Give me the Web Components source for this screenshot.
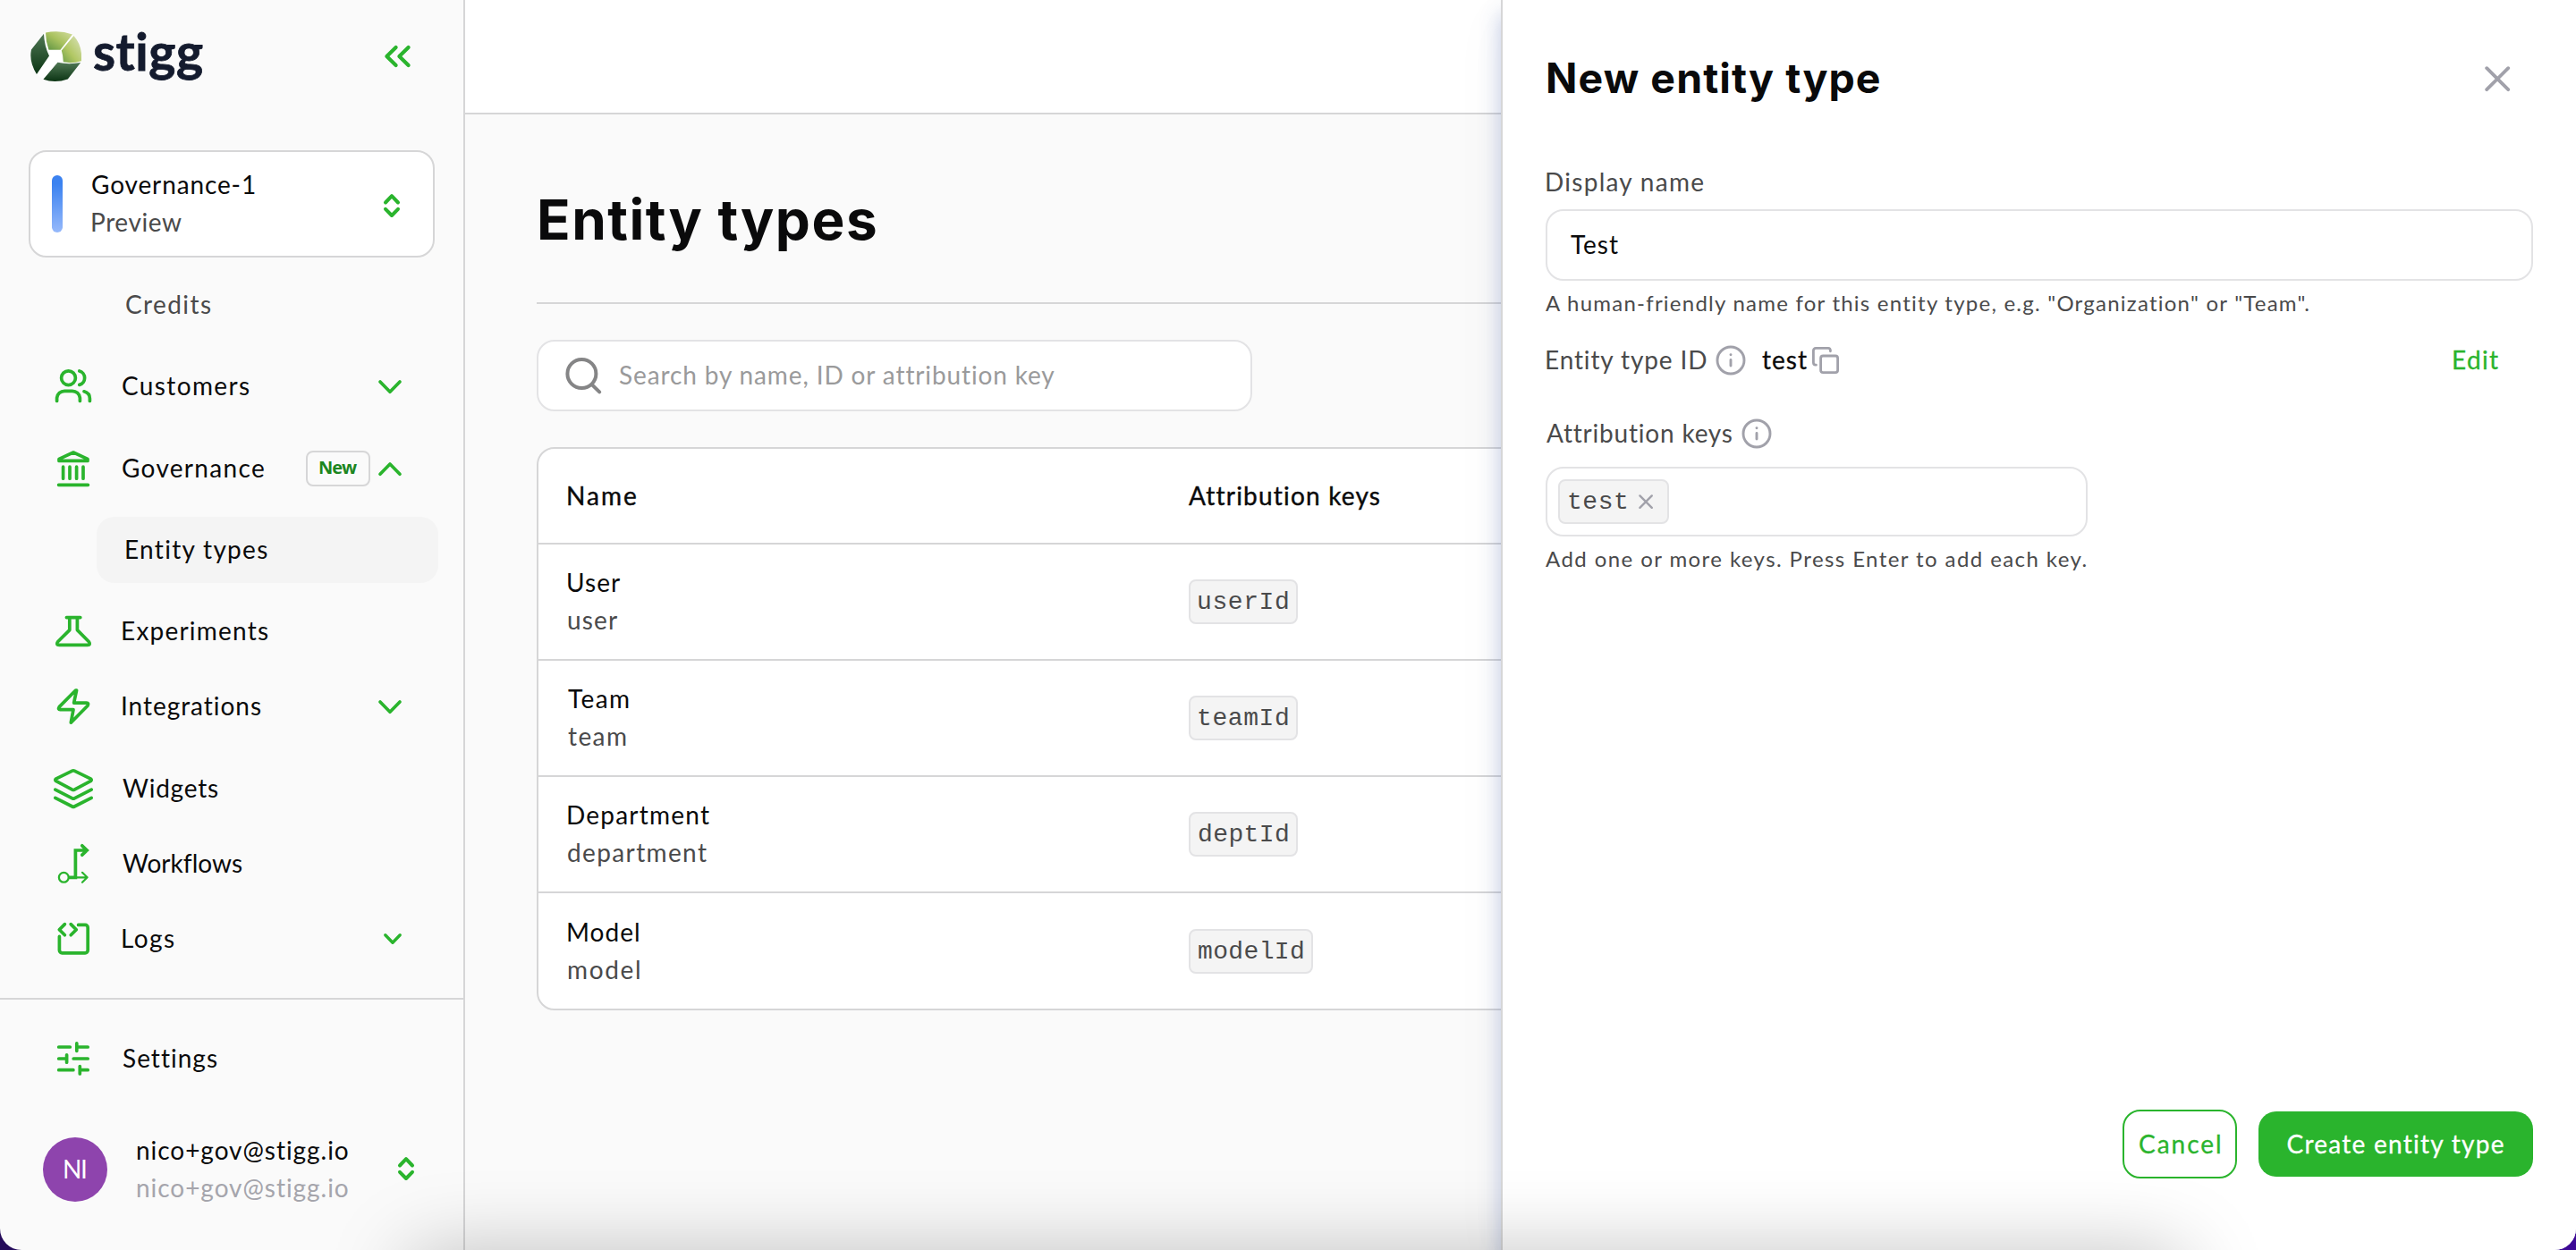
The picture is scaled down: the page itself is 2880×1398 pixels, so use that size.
<!DOCTYPE html>
<html lang="en">
<head>
<meta charset="utf-8">
<title>Entity types</title>
<style>
    html, body {
        margin: 0;
        height: 1398px;
        background: linear-gradient(90deg, #240a5a, #3d0a96);
        overflow: hidden;
    }
    body {
        font-family: Lato, "Open Sans", sans-serif;
        font-size: 28px;
        line-height: 42px;
        color: #0a0a0b;
        --green: #2ab42d;
        --line: #d6d6d7;
        --field: #e3e3e5;
        --muted: #4a4a4b;
        --grey: #a1a1aa;
    }
</style>
</head>
<body>
<st-app></st-app>

<script>
const ICONS = {
    users: '<circle cx="16.5" cy="12.7" r="7.9"/><path d="M28.8 5a8 8 0 0 1 0 15.4M3.6 38.4V35a8.6 8.6 0 0 1 8.6-7.7h8.6a8.6 8.6 0 0 1 8.6 7.7v3.4M34 27.8q6.4 1.8 6.4 8v2.6"/>',
    bank: '<path d="M22 4L38 11.4v2H6v-2zM10.6 20.2v13M18 20.2v13M25.6 20.2v13M33 20.2v13M5.6 40.3h32.8"/>',
    flask: '<path d="M14.4 6.6h15.4M17.8 7v13.6L4.6 33.7q-2.4 3.6 1.6 3.7h31.6q4-.1 1.6-3.7L26.4 20.6V7"/>',
    bolt: '<path d="M24.6 4L6.2 22.6q-1.8 3 1.2 3.1H22L19.3 40.2 38 21.2q1.6-3-1.2-3.1H22.6L25.6 4z"/>',
    layers: '<path d="M20.8 2.2L2.4 11.2q-1.2 1.1 0 2.2l18.4 9.8q1.2.6 2.4 0l18.4-9.8q1.2-1.1 0-2.2L23.2 2.2q-1.2-.6-2.4 0zM1.8 23.2l19 9.6q1.2.6 2.4 0l19-9.6M1.8 32.4l19 9.6q1.2.6 2.4 0l19-9.6"/>',
    flow: '<circle cx="11.3" cy="37.3" r="5.4" stroke-width="2.3"/><path d="M18 37.3h6.4V7H37M31.8 1.8L37.2 7l-5.4 5.2" stroke-linejoin="miter"/><path d="M24.4 37.3H37.6M32 31.8l5.6 5.5-5.6 5.5" stroke-width="2.2"/>',
    logs: '<path d="M12.4 5.6L6.3 11.7l6.1 6.1M19.2 5.6l6.1 6.1-6.1 6.1M6.4 19.4v15.4a3 3 0 0 0 3 3h25.8a3 3 0 0 0 3-3V9.4a3 3 0 0 0-3-3h-7.6"/>',
    sliders: '<path d="M5.7 9h12.6M26 9h12.2M25.8 4.9v8.4M5.7 22h8M14.6 17.8v8.4M22.2 22h16M5.7 34.7h16.2M29.3 30.6V39M30 34.7h8.2"/>',
    down: '<path d="M2 2l11 11.2L24 2"/>',
    up: '<path d="M2 13.2L13 2l11 11.2"/>',
    downSmall: '<path d="M1.8 1.8l8.2 8.4 8.2-8.4"/>',
    updown: '<path d="M2 9.5L9 2.2l7 7.3M2 16.8l7 7.2 7-7.2"/>',
    collapse: '<path d="M12.6 2L2.4 12l10.2 10M26.6 2L16.4 12l10.2 10"/>',
    search: '<circle cx="18.4" cy="18" r="16"/><path d="M30 30.4l8.2 8"/>',
    close: '<path d="M2.2 2.2l24 24M26.2 2.2l-24 24"/>',
    remove: '<path d="M1.4 1.4l13.4 13.4M14.8 1.4L1.4 14.8"/>',
    info: '<circle cx="17" cy="17" r="15"/><path d="M17 16.4v6.6M17 10.6v.2"/>',
    copy: '<rect x="9.6" y="10" width="19" height="18.6" rx="2.6"/><path d="M4.4 20.2H4a2.6 2.6 0 0 1-2.6-2.6V4A2.6 2.6 0 0 1 4 1.4h14a2.6 2.6 0 0 1 2.4 2.4v1"/>'
};

// <st-icon name="users" size="44 44" stroke="3.6">
class StIcon extends HTMLElement {
    constructor() {
        super();
        this.attachShadow({ mode: 'open' });
    }

    connectedCallback() {
        const [w, h] = (this.getAttribute('size') || '44 44').split(' ');
        this.shadowRoot.innerHTML = `
            <style>
                :host { display: block; flex: none; color: var(--green); }
                svg { display: block; overflow: visible; }
            </style>
            <svg width="${w}" height="${h}" viewBox="0 0 ${w} ${h}" fill="none" stroke="currentColor"
                stroke-width="${this.getAttribute('stroke') || 3.7}" stroke-linecap="round" stroke-linejoin="round">
                ${ICONS[this.getAttribute('name')]}
            </svg>
        `;
    }
}

// One line of text, tracked so that its glyphs span exactly "w" pixels
class StText extends HTMLElement {
    constructor() {
        super();
        this.attachShadow({ mode: 'open' });
        this.shadowRoot.innerHTML = `
            <style>
                :host { display: block; flex: none; padding-bottom: 2px; font-variant-ligatures: none; }
                span { display: block; white-space: nowrap; }
            </style>
            <span><slot></slot></span>
        `;
    }

    connectedCallback() {
        const text = this.textContent;
        const width = Number(this.getAttribute('w'));
        const cs = getComputedStyle(this);
        const ctx = document.createElement('canvas').getContext('2d');
        ctx.font = `${cs.fontWeight} ${cs.fontSize} ${cs.fontFamily}`;
        ctx.letterSpacing = '0.01px';
        const m = ctx.measureText(text);
        const ink = m.actualBoundingBoxLeft + m.actualBoundingBoxRight;
        const span = this.shadowRoot.querySelector('span');
        span.style.letterSpacing = `${(width - ink) / (text.length - 1)}px`;
        span.style.marginLeft = `${m.actualBoundingBoxLeft}px`;
        this.style.width = `${width}px`;
    }
}

class StLogo extends HTMLElement {
    constructor() {
        super();
        this.attachShadow({ mode: 'open' });
        this.shadowRoot.innerHTML = `
            <style>
                :host { display: flex; align-items: flex-start; gap: 14px; color: #141b2e; }
                st-text { font-size: 57px; line-height: 64px; font-weight: 700; margin-top: -10px; -webkit-text-stroke: .8px; }
            </style>
            <svg width="57" height="57" viewBox="0 0 57 57">
                <defs>
                    <linearGradient id="d" x1="0" y1="0" x2="0" y2="1"><stop offset="0" stop-color="#4f7754"/><stop offset="1" stop-color="#0c3514"/></linearGradient>
                    <linearGradient id="t" x1="1" y1="0" x2="0" y2="1"><stop offset="0" stop-color="#d3dc9f"/><stop offset=".5" stop-color="#a9c25f"/><stop offset="1" stop-color="#5d9342"/></linearGradient>
                    <linearGradient id="r" x1="1" y1="0" x2="0" y2="1"><stop offset="0" stop-color="#dbe3bd"/><stop offset=".6" stop-color="#b1c763"/><stop offset="1" stop-color="#6f9f49"/></linearGradient>
                </defs>
                <path fill="#fff" d="M16 1L48 4 57 34 42 53 14 54 7 48 0 23z"/>
                <path fill="url(#d)" d="M15 2.7L1 20.5Q-1.8 34 7 48L21 27.6Q15.5 16 15 2.7z"/>
                <path fill="url(#t)" d="M17 1.6Q32-2 47 3.6L33.5 20.7H20.5Q17 11 17 1.6z"/>
                <path fill="url(#r)" d="M48.4 5Q58.5 16 57 33.2 46.5 36.4 36.8 34.3 36.6 27 34.8 21.5z"/>
                <path fill="url(#d)" d="M30.5 34.8Q43 37.4 56.2 35L41.8 53.4Q27.5 58.5 14.4 53.7z"/>
            </svg>
            <st-text w="122">stigg</st-text>
        `;
    }
}

class NavItem extends HTMLElement {
    constructor() {
        super();
        this.attachShadow({ mode: 'open' });
        this.shadowRoot.innerHTML = `
            <style>
                :host { display: flex; align-items: center; height: 84px; padding: 0 69px 0 60px; }
                :host([gap]) { margin-bottom: 8px; }
                .label { margin-left: 33px; flex: 1; }
            </style>
            <st-icon name="${this.getAttribute('icon')}"></st-icon>
            <div class="label"><slot></slot></div>
            <slot name="end"></slot>
        `;
    }
}

class NavSub extends HTMLElement {
    constructor() {
        super();
        this.attachShadow({ mode: 'open' });
        this.shadowRoot.innerHTML = `
            <style>
                :host { display: flex; align-items: center; height: 74px; margin: 0 28px 12px 108px; padding-left: 33px; border-radius: 20px; color: var(--muted); }
                :host([active]) { background: #f4f4f4; color: #0a0a0b; margin-top: 12px; }
            </style>
            <slot></slot>
        `;
    }
}

class StSidebar extends HTMLElement {
    constructor() {
        super();
        this.attachShadow({ mode: 'open' });
        this.shadowRoot.innerHTML = `
            <style>
                :host { display: flex; flex-direction: column; width: 518px; flex: none; background: #fafafa; border-right: 2px solid var(--line); }
                header { display: flex; flex: none; justify-content: space-between; height: 133px; padding: 35px 60px 0 34px; }
                header st-icon { margin-top: 16px; }
                .env { display: flex; flex: none; align-items: center; box-sizing: border-box; height: 120px; margin: 0 32px; padding: 0 37px 0 24px; background: #fff; border: 2px solid var(--line); border-radius: 20px; }
                .env st-icon { margin-top: 4px; }
                .bar { width: 12px; height: 64px; border-radius: 6px; margin-right: 33px; background: linear-gradient(#3b82f0 15%, #96b9fb); }
                .names { flex: 1; }
                .names st-text { padding-bottom: 0; margin-top: -1px; margin-bottom: 1px; }
                .sub { color: var(--muted); }
                nav { flex: none; padding-top: 16px; height: 812px; }
                .badge { border: 2px solid var(--line); border-radius: 8px; height: 36px; width: 68px; margin-right: 9px; display: flex; align-items: center; justify-content: center; color: #1c861f; font: 700 20px/34px "Open Sans", sans-serif; }
                .foot { flex: none; border-top: 2px solid var(--line); padding-top: 24px; }
                .user { display: flex; align-items: center; padding: 40px 55px 0 48px; }
                .user st-icon { margin-top: -2px; }
                .avatar { width: 72px; height: 72px; border-radius: 50%; background: #8e44ad; color: #fff; display: flex; align-items: center; justify-content: center; margin-right: 33px; }
                .user .sub { color: #a5a5ac; }
            </style>
            <header>
                <st-logo></st-logo>
                <st-icon name="collapse" size="28 24" stroke="4.2"></st-icon>
            </header>
            <div class="env">
                <div class="bar"></div>
                <div class="names">
                    <st-text w="182">Governance-1</st-text>
                    <st-text w="100" class="sub">Preview</st-text>
                </div>
                <st-icon name="updown" size="18 26" stroke="4"></st-icon>
            </div>
            <nav>
                <nav-sub><st-text w="95">Credits</st-text></nav-sub>
                <nav-item icon="users" gap><st-text w="142">Customers</st-text><st-icon slot="end" name="down" size="26 15"></st-icon></nav-item>
                <nav-item icon="bank"><st-text w="158">Governance</st-text><div slot="end" class="badge"><st-text w="42">New</st-text></div><st-icon slot="end" name="up" size="26 15"></st-icon></nav-item>
                <nav-sub active><st-text w="159">Entity types</st-text></nav-sub>
                <nav-item icon="flask"><st-text w="163">Experiments</st-text></nav-item>
                <nav-item icon="bolt" gap><st-text w="155">Integrations</st-text><st-icon slot="end" name="down" size="26 15"></st-icon></nav-item>
                <nav-item icon="layers"><st-text w="107">Widgets</st-text></nav-item>
                <nav-item icon="flow"><st-text w="134">Workflows</st-text></nav-item>
                <nav-item icon="logs"><st-text w="58">Logs</st-text><st-icon slot="end" name="downSmall" size="20 12" stroke="3.4"></st-icon></nav-item>
            </nav>
            <div class="foot">
                <nav-item icon="sliders"><st-text w="106">Settings</st-text></nav-item>
                <div class="user">
                    <div class="avatar"><st-text w="24">NI</st-text></div>
                    <div class="names">
                        <st-text w="236">nico+gov@stigg.io</st-text>
                        <st-text w="236" class="sub">nico+gov@stigg.io</st-text>
                    </div>
                    <st-icon name="updown" size="18 26" stroke="4"></st-icon>
                </div>
            </div>
        `;
    }
}

class StTag extends HTMLElement {
    constructor() {
        super();
        this.attachShadow({ mode: 'open' });
        this.shadowRoot.innerHTML = `
            <style>
                :host { display: inline-flex; vertical-align: top; align-items: center; box-sizing: border-box; height: 50px; padding: 0 9px; border: 2px solid var(--field); border-radius: 8px; background: #f4f4f4; color: #4a4a4b; font-family: "Liberation Mono", monospace; font-size: 28px; }
                ::slotted(st-text) { padding: 2px 0 0; }
            </style>
            <slot></slot>
        `;
    }
}

class EntityRow extends HTMLElement {
    constructor() {
        super();
        this.attachShadow({ mode: 'open' });
        const [name, nameW, id, idW, key, keyW] = this.getAttribute('data').split(',');
        this.shadowRoot.innerHTML = `
            <style>
                :host { display: grid; grid-template-columns: 694px 1fr; align-items: center; height: 128px; padding-left: 33px; border-top: 2px solid var(--line); }
                :host(:last-child) { height: 129px; }
                .names st-text { padding: 0; margin-top: -1px; margin-bottom: 1px; }
                .id { color: var(--muted); }
            </style>
            <div class="names">
                <st-text w="${nameW}">${name}</st-text>
                <st-text class="id" w="${idW}">${id}</st-text>
            </div>
            <div><st-tag><st-text w="${keyW}">${key}</st-text></st-tag></div>
        `;
    }
}

class StMain extends HTMLElement {
    constructor() {
        super();
        this.attachShadow({ mode: 'open' });
        this.shadowRoot.innerHTML = `
            <style>
                :host { display: block; flex: 1; background: #fafafa; }
                .top { height: 126px; background: #fff; border-bottom: 2px solid var(--line); }
                .page { padding: 0 80px; }
                .title { height: 210px; display: flex; align-items: center; border-bottom: 2px solid var(--line); }
                .title st-text { font: 700 62px/80px Inter, sans-serif; margin: 27px 0 0 4px; }
                .search { display: flex; align-items: center; box-sizing: border-box; width: 800px; height: 80px; margin: 40px 0; padding-left: 30px; background: #fff; border: 2px solid var(--field); border-radius: 20px; color: #9a9a9b; }
                .search st-icon { color: #858586; margin-right: 20px; }
                .table { background: #fff; border: 2px solid var(--line); border-radius: 20px; overflow: hidden; }
                .head { display: grid; grid-template-columns: 694px 1fr; align-items: center; height: 105px; padding-left: 33px; -webkit-text-stroke: .4px; }
            </style>
            <div class="top"></div>
            <div class="page">
                <div class="title"><st-text w="375">Entity types</st-text></div>
                <div class="search">
                    <st-icon name="search" size="40 40" stroke="4"></st-icon>
                    <st-text w="489">Search by name, ID or attribution key</st-text>
                </div>
                <div class="table">
                    <div class="head"><st-text w="76">Name</st-text><st-text w="214">Attribution keys</st-text></div>
                    <entity-row data="User,58,user,55,userId,100"></entity-row>
                    <entity-row data="Team,68,team,65,teamId,100"></entity-row>
                    <entity-row data="Department,158,department,155,deptId,100"></entity-row>
                    <entity-row data="Model,79,model,80,modelId,117"></entity-row>
                </div>
            </div>
        `;
    }
}

class StDrawer extends HTMLElement {
    constructor() {
        super();
        this.attachShadow({ mode: 'open' });
        this.shadowRoot.innerHTML = `
            <style>
                :host { display: flex; flex-direction: column; box-sizing: border-box; padding: 0 48px 80px; background: #fff; border-left: 2px solid var(--line); box-shadow: 0 16px 22px rgba(60, 90, 180, .3), 0 16px 60px rgba(0, 0, 0, .04); color: var(--muted); }
                header { display: flex; justify-content: space-between; align-items: center; height: 176px; padding-right: 26px; }
                header st-text { font: 700 46.5px/60px Inter, sans-serif; color: #0a0a0b; margin-left: 3px; }
                header st-icon, .row st-icon, st-tag st-icon { color: var(--grey); }
                .label { margin: 6px 0 8px 1px; }
                .field { display: flex; align-items: center; box-sizing: border-box; height: 80px; border: 2px solid var(--field); border-radius: 20px; padding-left: 26px; color: #0a0a0b; }
                .help { font-size: 24px; line-height: 36px; margin: 7px 0 0; }
                .row { display: flex; align-items: center; height: 44px; padding-left: 1px; margin-top: 22px; }
                .row.second { margin: 38px 0 15px; }
                .row .hint { margin-left: 10px; }
                .test { color: #0a0a0b; margin: 0 6px 0 18px; -webkit-text-stroke: .3px; }
                .edit { color: var(--green); margin: 0 39px 0 auto; -webkit-text-stroke: .3px; }
                .keys { width: 606px; height: 78px; padding-left: 12px; }
                .keys st-tag { width: 124px; padding-left: 10px; }
                .keys st-icon { margin-left: 14px; }
                footer { display: flex; align-items: center; justify-content: flex-end; gap: 24px; margin-top: auto; }
                .btn { display: flex; align-items: center; justify-content: center; box-sizing: border-box; border-radius: 20px; -webkit-text-stroke: .3px; }
                .cancel { width: 128px; height: 77px; border: 2px solid var(--green); color: var(--green); }
                .create { width: 307px; height: 73px; background: var(--green); color: #fff; }
            </style>
            <header>
                <st-text w="370">New entity type</st-text>
                <st-icon name="close" size="28 28" stroke="3.8"></st-icon>
            </header>
            <st-text class="label" w="176">Display name</st-text>
            <div class="field"><st-text w="53">Test</st-text></div>
            <st-text class="help" w="857">A human-friendly name for this entity type, e.g. "Organization" or "Team".</st-text>
            <div class="row">
                <st-text w="179">Entity type ID</st-text>
                <st-icon class="hint" name="info" size="34 34" stroke="2.9"></st-icon>
                <st-text class="test" w="50">test</st-text>
                <st-icon name="copy" size="30 30" stroke="2.8"></st-icon>
                <st-text class="edit" w="50">Edit</st-text>
            </div>
            <div class="row second">
                <st-text w="208">Attribution keys</st-text>
                <st-icon class="hint" name="info" size="34 34" stroke="2.9"></st-icon>
            </div>
            <div class="field keys">
                <st-tag><st-text w="64">test</st-text><st-icon name="remove" size="16 16" stroke="2.4"></st-icon></st-tag>
            </div>
            <st-text class="help" w="606">Add one or more keys. Press Enter to add each key.</st-text>
            <footer>
                <div class="btn cancel"><st-text w="90">Cancel</st-text></div>
                <div class="btn create"><st-text w="242">Create entity type</st-text></div>
            </footer>
        `;
    }
}

class StApp extends HTMLElement {
    constructor() {
        super();
        this.attachShadow({ mode: 'open' });
        this.shadowRoot.innerHTML = `
            <style>
                :host { display: flex; position: relative; width: 2880px; height: 1398px; overflow: hidden; border-radius: 0 0 24px 24px; }
                st-drawer { position: absolute; top: 0; right: 0; bottom: 0; width: 1202px; }
                /* soft shade along the bottom edge of the window */
                .shade { position: absolute; left: 470px; right: 450px; top: 1414px; height: 60px; box-shadow: 0 0 90px 10px rgba(0, 0, 0, .27); pointer-events: none; }
            </style>
            <st-sidebar></st-sidebar>
            <st-main></st-main>
            <st-drawer></st-drawer>
            <div class="shade"></div>
        `;
    }
}

customElements.define('st-app', StApp);
customElements.define('st-sidebar', StSidebar);
customElements.define('st-main', StMain);
customElements.define('st-drawer', StDrawer);
customElements.define('st-logo', StLogo);
customElements.define('nav-item', NavItem);
customElements.define('nav-sub', NavSub);
customElements.define('entity-row', EntityRow);
customElements.define('st-tag', StTag);
customElements.define('st-icon', StIcon);
customElements.define('st-text', StText);
</script>
</body>
</html>
